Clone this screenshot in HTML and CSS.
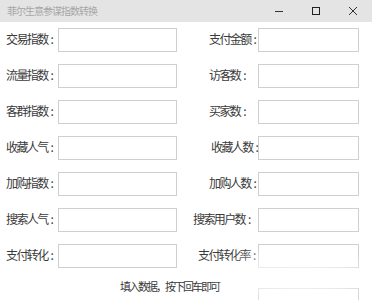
FILE: index.html
```html
<!DOCTYPE html>
<html lang="zh">
<head>
<meta charset="utf-8">
<link rel="stylesheet" href="styles.css">
</head>
<body>
<div class="window">
  <div class="titlebar">
    <span class="title">菲尔生意参谋指数转换</span>
    <div class="controls">
      <svg class="ctl" width="10" height="10" viewBox="0 0 10 10"><line x1="1" y1="5.5" x2="9" y2="5.5" stroke="#333" stroke-width="1"/></svg>
      <svg class="ctl" width="10" height="10" viewBox="0 0 10 10"><rect x="1.5" y="1.5" width="7" height="7" fill="none" stroke="#222" stroke-width="1"/></svg>
      <svg class="ctl" width="10" height="10" viewBox="0 0 10 10"><path d="M1 1 L9 9 M9 1 L1 9" stroke="#333" stroke-width="1" fill="none"/></svg>
    </div>
  </div>
  <div class="form">
    <span class="lbl">交易指数<span class="c">:</span></span><div class="box wide"></div>
    <span class="lbl r">支付金额<span class="c">:</span></span><div class="box"></div>

    <span class="lbl">流量指数<span class="c">:</span></span><div class="box wide"></div>
    <span class="lbl r">访客数<span class="c">:</span></span><div class="box"></div>

    <span class="lbl">客群指数<span class="c">:</span></span><div class="box wide"></div>
    <span class="lbl r">买家数<span class="c">:</span></span><div class="box"></div>

    <span class="lbl">收藏人气<span class="c">:</span></span><div class="box wide"></div>
    <span class="lbl r r2">收藏人数<span class="c">:</span></span><div class="box"></div>

    <span class="lbl">加购指数<span class="c">:</span></span><div class="box wide"></div>
    <span class="lbl r">加购人数<span class="c">:</span></span><div class="box"></div>

    <span class="lbl">搜索人气<span class="c">:</span></span><div class="box wide"></div>
    <span class="lbl r long">搜索用户数<span class="c">:</span></span><div class="box"></div>

    <span class="lbl">支付转化<span class="c">:</span></span><div class="box wide"></div>
    <span class="lbl r mid">支付转化率<span class="c">:</span></span><div class="box"></div>

    <span class="hint">填入数据，按下回车即可</span><div class="box last"></div>
  </div>
  <div class="smudge"></div>
</div>
</body>
</html>
```

FILE: styles.css
```css
html, body {
  margin: 0;
  padding: 0;
  background: #ffffff;
}
.window {
  position: relative;
  width: 372px;
  height: 300px;
  overflow: hidden;
  font-family: "Noto Sans CJK SC", "Noto Sans", sans-serif;
  background: #fff;
}
.titlebar {
  height: 22px;
  background: #e4e4e4;
  display: flex;
  align-items: center;
  justify-content: space-between;
}
.title {
  padding-left: 7px;
  font-size: 10px;
  letter-spacing: -1px;
  color: #a6a6a6;
  line-height: 22px;
}
.controls {
  display: flex;
  align-items: center;
  gap: 27px;
  padding-right: 14px;
}
.ctl {
  display: block;
}
.form {
  display: grid;
  grid-template-columns: 58px 119px 81px 101px;
  grid-auto-rows: 24px;
  row-gap: 12px;
  padding-top: 6px;
  align-items: center;
}
.lbl {
  font-size: 12px;
  letter-spacing: -1.6px;
  color: #3a3a3a;
  padding-left: 6px;
  white-space: nowrap;
  line-height: 24px;
  margin-top: -2px;
}
.c {
  padding-left: 3px;
}
.lbl.r {
  padding-left: 32px;
}
.lbl.r2 {
  padding-left: 34px;
}
.lbl.long {
  padding-left: 16px;
}
.lbl.mid {
  padding-left: 21px;
}
.box {
  box-sizing: border-box;
  height: 24px;
  border: 1px solid #cfcfcf;
  background: #fff;
}
.hint {
  grid-column: 1 / 4;
  padding-left: 120px;
  font-size: 11px;
  letter-spacing: -2px;
  color: #3a3a3a;
  line-height: 14px;
  align-self: start;
  margin-top: -1px;
}
.box.last {
  align-self: start;
  margin-top: 8px;
}
.smudge {
  position: absolute;
  left: 215px;
  top: 250px;
  width: 150px;
  height: 60px;
  background: radial-gradient(ellipse at 55% 45%, rgba(255,255,255,0.8) 0%, rgba(255,255,255,0.5) 45%, rgba(255,255,255,0) 75%);
}
```
